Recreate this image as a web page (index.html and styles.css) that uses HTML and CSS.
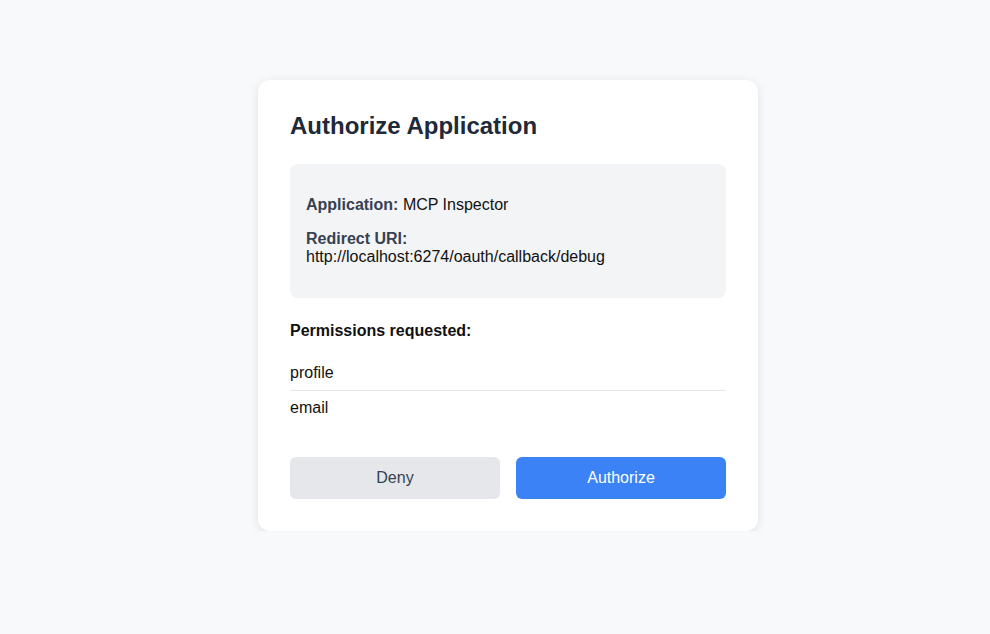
FILE: index.html
```html
<!DOCTYPE html>
<html lang="en">
<head>
<meta charset="utf-8">
<title>Authorize Application</title>
<link rel="stylesheet" href="styles.css">
</head>
<body>
<div class="page">
  <main class="card">
    <h1 class="title">Authorize Application</h1>
    <section class="info">
      <p class="info-row"><strong class="label">Application:</strong> MCP Inspector</p>
      <p class="info-row"><strong class="label">Redirect URI:</strong> http://localhost:6274/oauth/callback/debug</p>
    </section>
    <h3 class="perm-title">Permissions requested:</h3>
    <ul class="perm-list">
      <li class="perm-item">profile</li>
      <li class="perm-item">email</li>
    </ul>
    <div class="actions">
      <button class="btn btn-deny">Deny</button>
      <button class="btn btn-auth">Authorize</button>
    </div>
  </main>
</div>
</body>
</html>
```
FILE: styles.css
```css
html, body {
  margin: 0;
  padding: 0;
  background: #f8f9fa;
  font-family: "Liberation Sans", Arial, sans-serif;
  color: #111;
}
.page {
  display: flex;
  justify-content: center;
  padding: 80px 0 0 26px;
}
.card {
  width: 500px;
  box-sizing: border-box;
  background: #fff;
  border-radius: 12px;
  padding: 32px;
  box-shadow: 0 2px 10px rgba(0, 0, 0, 0.1);
}
.title {
  margin: 0 0 24px;
  font-size: 24px;
  line-height: 28px;
  font-weight: bold;
  color: #1f2937;
}
.info {
  background: #f3f4f6;
  border-radius: 8px;
  padding: 16px;
}
.info-row {
  margin: 16px 0;
  font-size: 16px;
  line-height: 18px;
}
.label {
  color: #374151;
}
.perm-title {
  margin: 24px 0 16px;
  font-size: 16px;
  line-height: 18px;
  font-weight: bold;
  color: #111;
}
.perm-list {
  list-style: none;
  margin: 0;
  padding: 0;
}
.perm-item {
  padding: 8px 0;
  font-size: 16px;
  line-height: 18px;
  border-bottom: 1px solid #e5e7eb;
}
.perm-item:last-child {
  border-bottom: none;
}
.actions {
  display: flex;
  gap: 16px;
  margin-top: 32px;
}
.btn {
  flex: 1;
  height: 42px;
  border: none;
  border-radius: 6px;
  font-family: "Liberation Sans", Arial, sans-serif;
  font-size: 16px;
  cursor: pointer;
}
.btn-deny {
  background: #e5e7eb;
  color: #374151;
}
.btn-auth {
  background: #3b82f6;
  color: #fff;
}
```
